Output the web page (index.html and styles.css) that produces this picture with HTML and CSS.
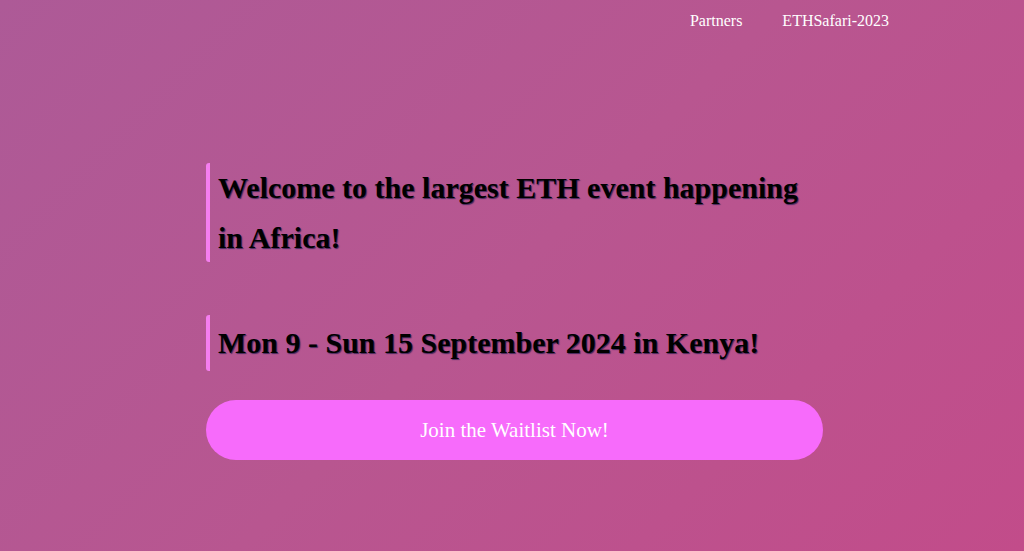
FILE: index.html
```html
<!DOCTYPE html>
<html>
<head>
<meta charset="utf-8">
<link rel="stylesheet" href="styles.css">
</head>
<body>
<header class="nav">
  <a class="nav-link" href="#">Partners</a>
  <a class="nav-link" href="#">ETHSafari-2023</a>
</header>
<main class="hero">
  <h1 class="headline">Welcome to the largest ETH event happening in Africa!</h1>
  <h2 class="headline headline-date">Mon 9 - Sun 15 September 2024 in Kenya!</h2>
  <a class="cta" href="#">Join the Waitlist Now!</a>
</main>
</body>
</html>
```
FILE: styles.css
```css
html, body {
  margin: 0;
  padding: 0;
  height: 100%;
}
body {
  font-family: "Liberation Serif", "Times New Roman", serif;
  background: linear-gradient(135deg, #ad5a97 0%, #b85690 50%, #c24c8a 100%);
  min-height: 551px;
  overflow: hidden;
}
.nav {
  display: flex;
  justify-content: flex-end;
  gap: 40px;
  padding: 11px 135px 0 0;
  height: 30px;
  box-sizing: border-box;
}
.nav-link {
  color: #fff;
  text-decoration: none;
  font-size: 16px;
  line-height: 19px;
}
.hero {
  width: 617px;
  margin: 133px 0 0 206px;
  display: flex;
  flex-direction: column;
}
.headline {
  margin: 0;
  border-left: 4px solid #f57ef0;
  border-radius: 3px;
  padding-left: 8px;
  font-size: 30px;
  font-weight: bold;
  line-height: 49.5px;
  color: #000;
  text-shadow: 1px 1px 1px rgba(40, 30, 80, 0.8);
  width: 590px;
}
.headline-date {
  margin-top: 53px;
  line-height: 50px;
  padding: 3px 0 3px 8px;
}
.cta {
  margin-top: 29px;
  height: 60px;
  border-radius: 30px;
  background: #f76bfb;
  color: #fff;
  text-decoration: none;
  font-size: 21px;
  display: flex;
  align-items: center;
  justify-content: center;
}
```
